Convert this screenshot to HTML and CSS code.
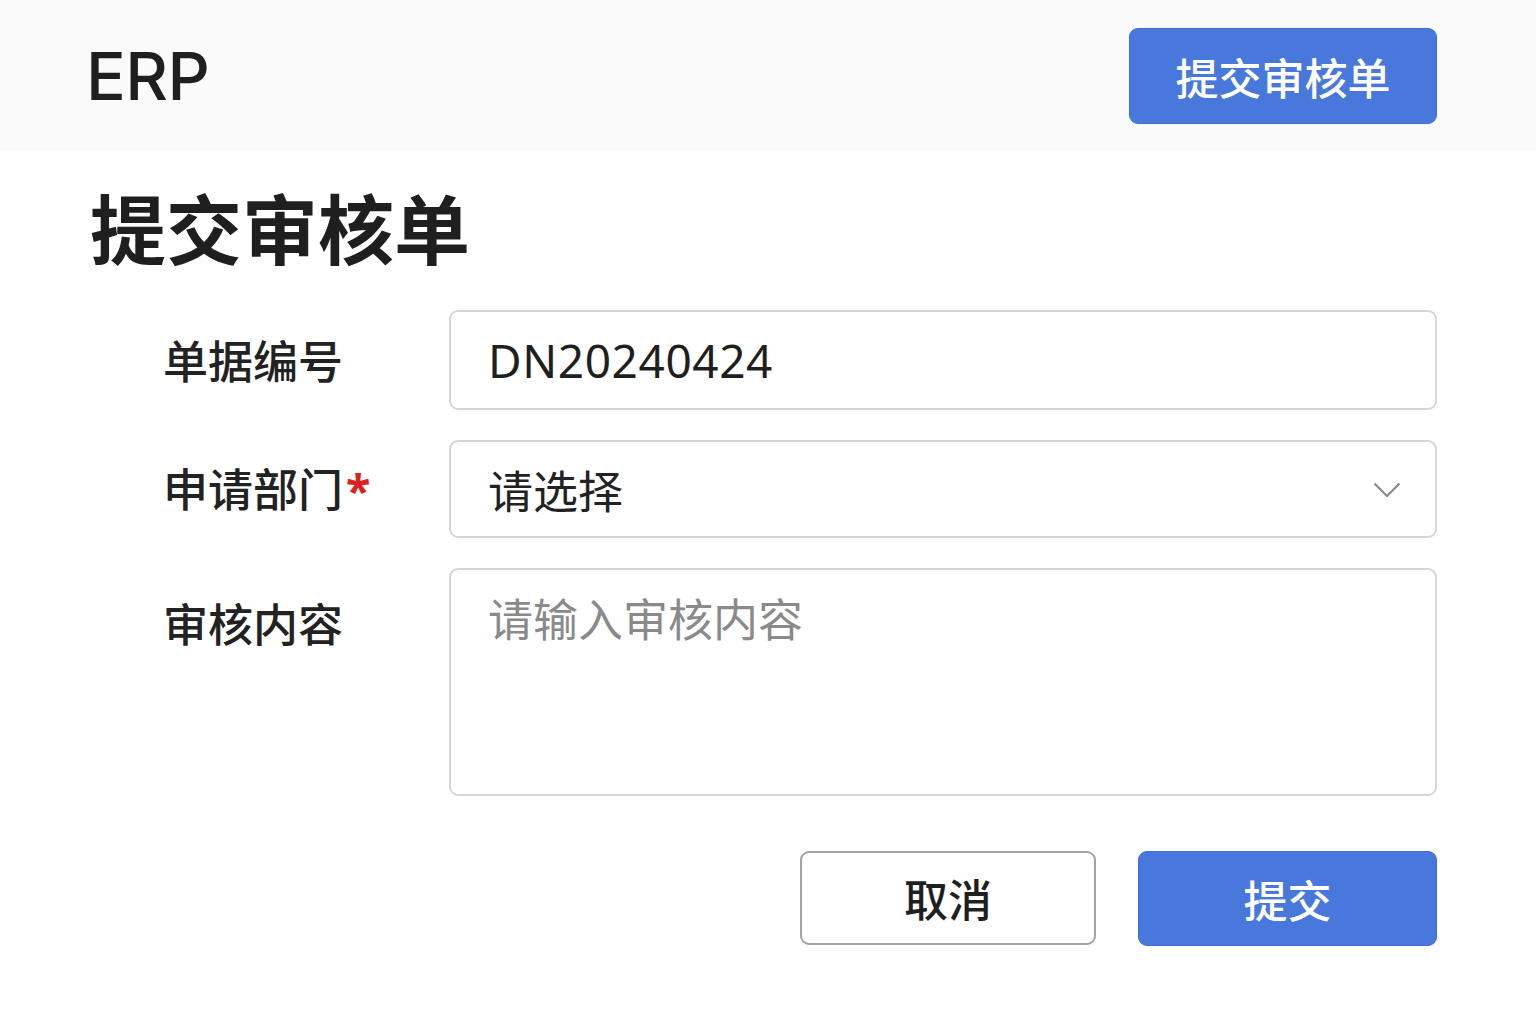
FILE: index.html
```html
<!DOCTYPE html>
<html lang="zh-CN">
<head>
<meta charset="utf-8">
<title>ERP - 提交审核单</title>
<link rel="stylesheet" href="styles.css">
</head>
<body>
<header class="topbar">
  <div class="logo">ERP</div>
  <button class="btn btn-primary btn-header" type="button">提交审核单</button>
</header>
<main class="page">
  <h1 class="title">提交审核单</h1>
  <form class="form">
    <div class="row">
      <label class="label">单据编号</label>
      <input class="field input" type="text" value="DN20240424">
    </div>
    <div class="row">
      <label class="label">申请部门<span class="req">*</span></label>
      <div class="field select">
        <span class="select-text">请选择</span>
        <svg class="chevron" width="28" height="16" viewBox="0 0 28 16"><path d="M1.5 1.5 L14 14 L26.5 1.5" fill="none" stroke="#8a8a8a" stroke-width="2.2"/></svg>
      </div>
    </div>
    <div class="row row-top">
      <label class="label label-top">审核内容</label>
      <textarea class="field textarea" placeholder="请输入审核内容"></textarea>
    </div>
    <div class="actions">
      <button class="btn btn-cancel" type="button">取消</button>
      <button class="btn btn-primary btn-submit" type="button">提交</button>
    </div>
  </form>
</main>
</body>
</html>
```
FILE: styles.css
```css
* { box-sizing: border-box; }
html, body { margin: 0; padding: 0; background: #ffffff; }
body {
  font-family: "Noto Sans", "Noto Sans CJK SC", sans-serif;
  color: #222222;
}
.topbar {
  height: 150px;
  background: #fafafa;
  display: flex;
  align-items: center;
  justify-content: space-between;
  padding: 0 99px 0 86px;
}
.logo {
  font-family: "Inter", "Noto Sans", sans-serif;
  font-size: 66px;
  font-weight: 500;
  letter-spacing: -0.5px;
  color: #1f1f1f;
  line-height: 1;
  margin-top: 2px;
}
.btn {
  font-family: "Noto Sans CJK SC", sans-serif;
  border-radius: 9px;
  cursor: pointer;
  display: flex;
  align-items: center;
  justify-content: center;
  padding: 0;
}
.btn-primary {
  background: #4878dc;
  border: 1px solid #3f6fd6;
  color: #ffffff;
}
.btn-header {
  width: 308px;
  height: 96px;
  font-size: 43px;
  font-weight: 500;
  margin-top: 2px;
}
.page {
  padding: 0 99px 0 90px;
}
.title {
  margin: 36px 0 0 0;
  font-family: "Noto Sans CJK SC", sans-serif;
  font-size: 76px;
  line-height: 80px;
  font-weight: 700;
  letter-spacing: 0;
  color: #1f1f1f;
}
.form {
  margin-top: 44px;
  display: flex;
  flex-direction: column;
  gap: 30px;
}
.row {
  display: grid;
  grid-template-columns: 359px 1fr;
  align-items: center;
}
.row-top { align-items: start; }
.label {
  padding-left: 73px;
  font-family: "Noto Sans CJK SC", sans-serif;
  font-size: 45px;
  font-weight: 500;
  color: #222222;
  line-height: 54px;
}
.label-top { padding-top: 28px; }
.req {
  color: #e02020;
  font-family: "Noto Sans", sans-serif;
  font-weight: 700;
  margin-left: 3px;
}
.field {
  width: 100%;
  border: 2px solid #d6d6d6;
  border-radius: 9px;
  background: #ffffff;
  font-family: "Noto Sans", "Noto Sans CJK SC", sans-serif;
  color: #1f1f1f;
  outline: none;
}
.input {
  height: 100px;
  padding: 0 0 0 37px;
  font-size: 46px;
  letter-spacing: 0.6px;
}
.select {
  height: 98px;
  padding: 0 34px 0 37px;
  display: flex;
  align-items: center;
  justify-content: space-between;
}
.select-text {
  font-family: "Noto Sans CJK SC", sans-serif;
  font-size: 45px;
  color: #222222;
}
.chevron { margin-top: 2px; }
.textarea {
  height: 228px;
  resize: none;
  padding: 21px 37px;
  font-family: "Noto Sans CJK SC", sans-serif;
  font-size: 45px;
  line-height: 54px;
}
.textarea::placeholder { color: #8a8a8a; }
.actions {
  display: flex;
  justify-content: flex-end;
  gap: 42px;
  margin-top: 25px;
}
.btn-cancel {
  width: 296px;
  height: 94px;
  background: #ffffff;
  border: 2px solid #a3a3a3;
  color: #1f1f1f;
  font-size: 44px;
  font-weight: 500;
}
.btn-submit {
  width: 299px;
  height: 95px;
  font-size: 44px;
  font-weight: 500;
}
```
